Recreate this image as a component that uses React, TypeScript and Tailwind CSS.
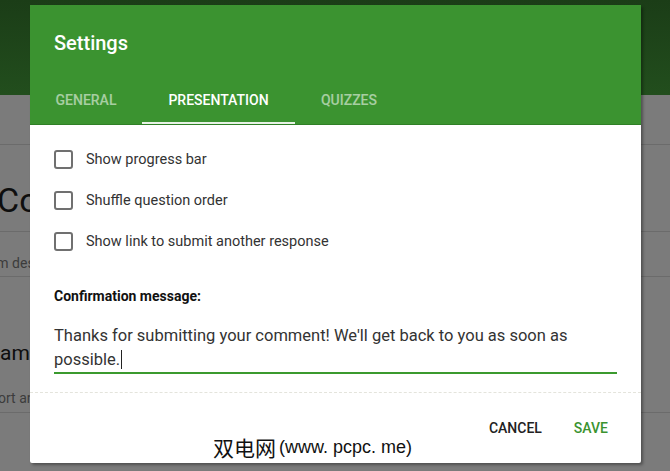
import React from "react";

const font = { fontFamily: "Roboto, 'Liberation Sans', sans-serif" };

function Checkbox({ label }: { label: string }) {
  return (
    <div className="flex h-[41px] items-center">
      <div className="h-[19px] w-[19px] rounded-[3px] border-2 border-[#707070] bg-white" />
      <span className="ml-[13px] text-[14.5px] leading-[20px] text-[#333]">{label}</span>
    </div>
  );
}

export default function App() {
  return (
    <div className="relative h-[471px] w-[670px] overflow-hidden bg-[#7b7b7b]" style={font}>
      {/* background page under scrim */}
      <div className="h-[95px] bg-gradient-to-b from-[#1b3d17] to-[#224e1d]" />
      <div className="h-[50px] border-b border-[#6b6b6b]" />
      <div className="flex h-[87px] items-center border-b border-[#6b6b6b] pt-[24px]">
        <span className="ml-[-3px] text-[34px] leading-[38px] text-[#0e0e0e]">Comments</span>
      </div>
      <div className="flex h-[45px] items-end border-b border-[#6b6b6b] pb-[2px]">
        <span className="ml-[-24px] text-[14px] text-[#3c3c3c]">Form description</span>
      </div>
      <div className="h-[62px]" />
      <div className="flex h-[30px] items-center">
        <span className="ml-[-15px] text-[21px] text-[#0e0e0e]">Name</span>
      </div>
      <div className="flex h-[44px] items-end border-b border-[#6b6b6b] pb-[3px]">
        <span className="ml-[-18px] text-[14px] text-[#3c3c3c]">Short answer text</span>
      </div>

      {/* dialog */}
      <div className="absolute left-[30px] top-[5px] flex h-[458px] w-[611px] flex-col rounded-[2px] bg-white shadow-[2px_2px_3px_rgba(0,0,0,0.35)]">
        <div className="flex h-[120px] flex-col border-b border-[#2f7f26] bg-[#3b9330]">
          <div className="px-6 pt-[26px] text-[20px] font-medium leading-[24px] text-white">Settings</div>
          <div className="mt-auto flex h-[48px] text-[14px] font-medium">
            <div className="flex w-[112px] items-center justify-center text-white/55">GENERAL</div>
            <div className="flex w-[153px] items-center justify-center border-b-2 border-[#e8f2e6] pt-[2px] text-white">
              PRESENTATION
            </div>
            <div className="flex w-[108px] items-center justify-center text-white/55">QUIZZES</div>
          </div>
        </div>
        <div className="flex flex-col px-6 pt-[14px]">
          <Checkbox label="Show progress bar" />
          <Checkbox label="Shuffle question order" />
          <Checkbox label="Show link to submit another response" />
          <div className="mt-[24px] text-[14px] font-bold leading-[20px] text-[#111]">Confirmation message:</div>
          <div className="mt-[18px] border-b-2 border-[#3b9a2e] text-[16.5px] leading-[24px] text-[#333]">
            Thanks for submitting your comment! We'll get back to you as soon as
            <br />
            <span className="border-r border-[#222] pr-[1px]">possible.</span>
          </div>
        </div>
        <div className="mt-[18px] border-t border-dashed border-[#e4e4dc]" />
        <div className="flex justify-end gap-[32px] pr-[33px] pt-[26px] text-[14px] font-medium leading-[18px]">
          <span className="text-[#222]">CANCEL</span>
          <span className="text-[#3b9330]">SAVE</span>
        </div>
      </div>

      {/* watermark */}
      <div className="absolute left-[213px] top-[435px] flex items-center leading-[24px] text-[#111]">
        <span className="text-[21px]" style={{ fontFamily: "'Noto Sans CJK SC', sans-serif" }}>
          双电网
        </span>
        <span className="ml-[3px] text-[18px]" style={{ fontFamily: "'Liberation Sans', sans-serif" }}>
          (www. pcpc. me)
        </span>
      </div>
    </div>
  );
}
